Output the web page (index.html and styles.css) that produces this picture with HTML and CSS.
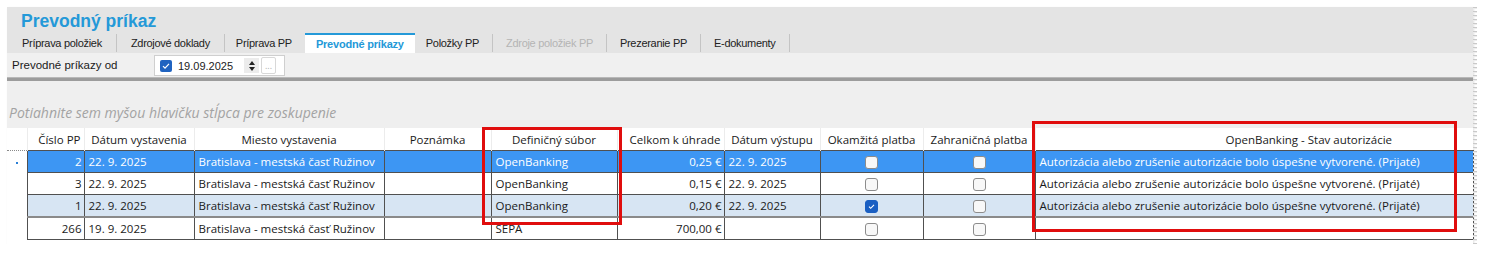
FILE: index.html
```html
<!DOCTYPE html>
<html lang="sk">
<head>
  <meta charset="UTF-8">
  <title>Prevodný príkaz</title>
  <link rel="stylesheet" href="styles.css">
</head>
<body>
  <div class="window">
    <!-- Title and tabs -->
    <div class="header">
      <h1 class="title">Prevodný príkaz</h1>
      <div class="tabs">
        <span class="tab">Príprava položiek</span>
        <span class="tab">Zdrojové doklady</span>
        <span class="tab before-active">Príprava PP</span>
        <span class="tab active">Prevodné príkazy</span>
        <span class="tab">Položky PP</span>
        <span class="tab disabled">Zdroje položiek PP</span>
        <span class="tab">Prezeranie PP</span>
        <span class="tab">E-dokumenty</span>
      </div>
    </div>

    <!-- Filter toolbar -->
    <div class="toolbar">
      <span class="toolbar-label">Prevodné príkazy od</span>
      <div class="date-box">
        <span class="date-check">
          <svg width="12" height="12" viewBox="0 0 12 12"><path d="M3 6.2 L5 8.2 L9 3.8" fill="none" stroke="#fff" stroke-width="1.2"/></svg>
        </span>
        <span class="date-text">19.09.2025</span>
        <span class="spinner"><span class="up"></span><span class="down"></span></span>
        <span class="ellipsis">...</span>
      </div>
    </div>
    <div class="divider"></div>

    <!-- Grid -->
    <div class="grid-area">
      <div class="group-panel">Potiahnite sem myšou hlavičku stĺpca pre zoskupenie</div>
      <table class="grid">
        <colgroup>
          <col style="width:20px"><col style="width:57px"><col style="width:110px"><col style="width:190px">
          <col style="width:107px"><col style="width:126px"><col style="width:107px"><col style="width:96px">
          <col style="width:103px"><col style="width:112px"><col style="width:438px">
        </colgroup>
        <thead>
          <tr>
            <th class="ind"></th>
            <th class="right">Číslo PP</th>
            <th>Dátum vystavenia</th>
            <th>Miesto vystavenia</th>
            <th>Poznámka</th>
            <th>Definičný súbor</th>
            <th class="right">Celkom k úhrade</th>
            <th>Dátum výstupu</th>
            <th>Okamžitá platba</th>
            <th>Zahraničná platba</th>
            <th class="ob">OpenBanking - Stav autorizácie</th>
          </tr>
        </thead>
        <tbody>
          <tr class="selected">
            <td class="ind"><span class="dot"></span></td>
            <td class="right">2</td><td>22. 9. 2025</td><td>Bratislava - mestská časť Ružinov</td><td></td>
            <td>OpenBanking</td><td class="right">0,25 €</td><td>22. 9. 2025</td>
            <td class="center"><span class="chk"></span></td><td class="center"><span class="chk"></span></td>
            <td>Autorizácia alebo zrušenie autorizácie bolo úspešne vytvorené. (Prijaté)</td>
          </tr>
          <tr>
            <td class="ind"></td>
            <td class="right">3</td><td>22. 9. 2025</td><td>Bratislava - mestská časť Ružinov</td><td></td>
            <td>OpenBanking</td><td class="right">0,15 €</td><td>22. 9. 2025</td>
            <td class="center"><span class="chk"></span></td><td class="center"><span class="chk"></span></td>
            <td>Autorizácia alebo zrušenie autorizácie bolo úspešne vytvorené. (Prijaté)</td>
          </tr>
          <tr class="alt">
            <td class="ind"></td>
            <td class="right">1</td><td>22. 9. 2025</td><td>Bratislava - mestská časť Ružinov</td><td></td>
            <td>OpenBanking</td><td class="right">0,20 €</td><td>22. 9. 2025</td>
            <td class="center"><span class="chk checked"><svg width="11" height="11" viewBox="0 0 11 11"><path d="M3 5.6 L4.7 7.3 L8 3.8" fill="none" stroke="#fff" stroke-width="1.1"/></svg></span></td>
            <td class="center"><span class="chk"></span></td>
            <td>Autorizácia alebo zrušenie autorizácie bolo úspešne vytvorené. (Prijaté)</td>
          </tr>
          <tr>
            <td class="ind"></td>
            <td class="right">266</td><td>19. 9. 2025</td><td>Bratislava - mestská časť Ružinov</td><td></td>
            <td>SEPA</td><td class="right">700,00 €</td><td></td>
            <td class="center"><span class="chk"></span></td><td class="center"><span class="chk"></span></td>
            <td></td>
          </tr>
        </tbody>
      </table>

      <!-- Highlight frames -->
      <div class="mark mark-file"></div>
      <div class="mark mark-status"></div>
    </div>
  </div>
</body>
</html>
```

FILE: styles.css
```css
/* General */
body {
  margin: 0;
  background-color: #fff;
  font-family: "Open Sans", "Noto Sans", sans-serif;
  color: #1a1a1a;
}

.window {
  position: relative;
  margin: 7px 0 0 7px;
  width: 1466px;
  height: 237px;
  background-color: #fff;
  box-shadow: 1px 1px 2px rgba(0, 0, 0, 0.12);
}

/* torn paper edges on the right and bottom */
.window::after {
  content: "";
  position: absolute;
  top: 0;
  right: -4px;
  width: 4px;
  height: 241px;
  background: repeating-linear-gradient(180deg, #c9c9c9 0 1px, #ececec 1px 2px, transparent 2px 4px);
}

.window::before {
  content: "";
  position: absolute;
  left: 0;
  bottom: -4px;
  width: 1466px;
  height: 4px;
  background: repeating-linear-gradient(90deg, #c9c9c9 0 1px, #ececec 1px 2px, transparent 2px 4px);
}

/* Title + tabs */
.header {
  background-color: #e4e4e4;
  height: 46px;
  display: flex;
  flex-direction: column;
}

.title {
  margin: 0;
  padding: 2px 0 0 14px;
  height: 24px;
  font-family: "Liberation Sans", Arial, sans-serif;
  font-size: 17.5px;
  font-weight: 700;
  color: #2499d8;
  line-height: 25px;
}

.tabs {
  display: flex;
  height: 20px;
  padding-left: 1px;
}

.tab {
  font-family: "Liberation Sans", Arial, sans-serif;
  font-size: 11px;
  letter-spacing: -0.3px;
  padding: 0 14px;
  border-right: 1px solid #c4c4c4;
  margin: 1px 0;
  line-height: 18px;
  color: #222;
}

.tab.before-active {
  padding-left: 11px;
  padding-right: 13px;
  border-right: none;
}

.tab.active {
  margin: 0;
  background-color: #fff;
  border-top: 2px solid #2499d8;
  border-right: none;
  color: #2499d8;
  font-weight: 700;
  padding: 0 11px;
  line-height: 18px;
  letter-spacing: -0.2px;
}

.tab.active ~ .tab {
  padding: 0 13px;
}

.tab.active + .tab {
  padding-left: 11px;
}

.tab.disabled {
  color: #b4b4b4;
}

/* Toolbar */
.toolbar {
  background-color: #f0f0f0;
  height: 24px;
  display: flex;
  align-items: center;
  padding-left: 5px;
}

.toolbar-label {
  font-family: "Liberation Sans", Arial, sans-serif;
  font-size: 11.5px;
  width: 142px;
}

.date-box {
  display: flex;
  align-items: center;
  width: 129px;
  height: 19px;
  background-color: #fff;
  border: 1px solid #cfcfcf;
  margin-top: 1px;
}

.date-check {
  width: 12px;
  height: 12px;
  margin-left: 5px;
  background-color: #1f63c0;
  border-radius: 2px;
  display: flex;
}

.date-text {
  font-family: "Liberation Sans", Arial, sans-serif;
  font-size: 11px;
  margin-left: 6px;
  width: 66px;
  color: #222;
}

.spinner {
  width: 15px;
  height: 15px;
  background-color: #ececec;
  display: flex;
  flex-direction: column;
  align-items: center;
  justify-content: center;
  gap: 2px;
}

.spinner .up {
  width: 0;
  height: 0;
  border-left: 3px solid transparent;
  border-right: 3px solid transparent;
  border-bottom: 4px solid #222;
}

.spinner .down {
  width: 0;
  height: 0;
  border-left: 3px solid transparent;
  border-right: 3px solid transparent;
  border-top: 4px solid #222;
}

.ellipsis {
  width: 13px;
  height: 15px;
  margin-left: 2px;
  border: 1px solid #d8d8d8;
  border-radius: 2px;
  font-size: 9px;
  color: #b0b0b0;
  text-align: center;
  line-height: 16px;
}

.divider {
  height: 3px;
  background-color: #9c9c9c;
  border-top: 1px solid #b8b8b8;
}

/* Grid */
.grid-area {
  position: relative;
  background-color: #fff;
  height: 163px;
}

.group-panel {
  background-color: #efefef;
  height: 47px;
  padding-left: 2px;
  font-size: 14px;
  font-style: italic;
  color: #a3a3a3;
  line-height: 64px;
  overflow: hidden;
}

.grid {
  border-collapse: collapse;
  table-layout: fixed;
  width: 1466px;
  font-size: 11.5px;
}

.grid th {
  height: 22px;
  padding: 0 3px;
  font-weight: 400;
  text-align: center;
  white-space: nowrap;
  overflow: hidden;
  border-left: 1px solid #ececec;
  border-bottom: 1px dotted #8a8a8a;
  color: #1a1a1a;
}

.grid th.ind {
  border-left: none;
}

.grid th.right {
  text-align: right;
}

.grid th.ob {
  padding-left: 112px;
  text-align: center;
}

.grid td {
  height: 21px;
  padding: 0 4px;
  white-space: nowrap;
  overflow: hidden;
  border: 1px solid #505050;
}

.grid td.ind {
  border: none;
  border-right: 1px solid #505050;
  background-color: #fff;
  text-align: center;
}

.grid td.right {
  text-align: right;
  padding-right: 2px;
}

.grid td.center {
  text-align: center;
}

.grid tr.selected td {
  background-color: #3d96f3;
  color: #fff;
}

.grid tr.selected td.ind {
  background-color: #fff;
}

.grid tr.alt td {
  background-color: #d7e5f3;
}

.grid tr.alt td.ind {
  background-color: #fff;
}

.grid tr.alt td:not(.ind) {
  border-bottom: 2px solid #8a8a8a;
}

.dot {
  display: inline-block;
  width: 2px;
  height: 2px;
  background-color: #2a7fd6;
  vertical-align: middle;
}

.chk {
  display: inline-flex;
  width: 11px;
  height: 11px;
  border: 1px solid #8c8c8c;
  border-radius: 3px;
  background-color: #f8f8f8;
  vertical-align: middle;
}

.chk.checked {
  background-color: #1a5fc2;
  border-color: #1a5fc2;
}

/* Red highlight frames drawn over the grid */
.mark {
  position: absolute;
  border: 3px solid #e00d0d;
  box-sizing: border-box;
}

.mark-file {
  left: 475px;
  top: 46px;
  width: 140px;
  height: 98px;
}

.mark-status {
  left: 1025px;
  top: 40px;
  width: 425px;
  height: 111px;
}
```
